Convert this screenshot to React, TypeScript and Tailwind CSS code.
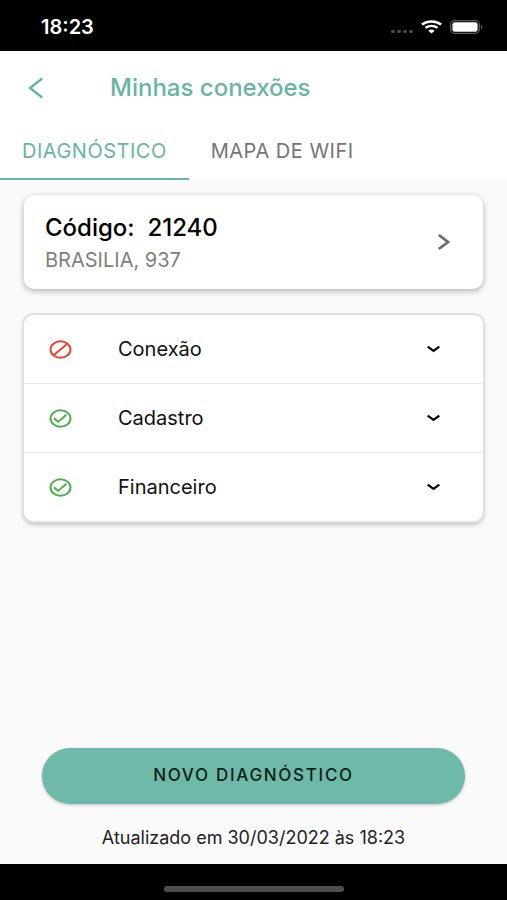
import { useState } from "react";

type Status = "error" | "ok";

type CheckItem = {
  name: string;
  status: Status;
};

const tabs = ["DIAGNÓSTICO", "MAPA DE WIFI"];

const checks: CheckItem[] = [
  { name: "Conexão", status: "error" },
  { name: "Cadastro", status: "ok" },
  { name: "Financeiro", status: "ok" },
];

function StatusBar() {
  return (
    <div className="flex h-[51px] items-center justify-between bg-black pt-[2px] pr-6 pl-[41px] text-white">
      <span className="text-xl font-semibold">18:23</span>
      <div className="flex items-center gap-2">
        <svg width="22" height="14" viewBox="0 0 22 14" fill="#4b4b4b">
          <rect x="0" y="10" width="4" height="3" rx="1.5" />
          <rect x="6" y="10" width="4" height="3" rx="1.5" />
          <rect x="12" y="10" width="4" height="3" rx="1.5" />
          <rect x="18" y="10" width="4" height="3" rx="1.5" />
        </svg>
        <svg width="21" height="14" viewBox="0 0 20 14" preserveAspectRatio="none" fill="none" stroke="white">
          <path d="M.8 4.6C6 .4 14 .4 19.2 4.6" strokeWidth="2.6" />
          <path d="M4.2 7.9C7.5 5.2 12.5 5.2 15.8 7.9" strokeWidth="2.4" />
          <path d="M7 10.8C8.6 9.2 11.4 9.2 13 10.8L10 13.6Z" fill="white" stroke="none" />
        </svg>
        <svg width="33" height="14" viewBox="0 0 33 14">
          <rect x=".7" y=".7" width="28.6" height="12.6" rx="4" fill="none" stroke="#5c5c5c" strokeWidth="1.3" />
          <rect x="2.4" y="2.2" width="25.2" height="9.6" rx="2.4" fill="white" />
          <path d="M31 4.8c1.6.6 1.6 3.8 0 4.4z" fill="#6b6b6b" />
        </svg>
      </div>
    </div>
  );
}

function StatusIcon({ status }: { status: Status }) {
  if (status === "error") {
    return (
      <svg width="23" height="19" viewBox="0 0 23 19" fill="none" stroke="#ea4335" strokeWidth="2">
        <ellipse cx="11.5" cy="9.5" rx="10" ry="8.2" />
        <path d="M4.6 15.2 18.4 3.8" />
      </svg>
    );
  }
  return (
    <svg width="23" height="19" viewBox="0 0 23 19" fill="none" stroke="#4caf50" strokeWidth="2">
      <ellipse cx="11.5" cy="9.5" rx="10" ry="8.2" />
      <path d="M5 9.4 9.2 12.8 17.4 5.8" />
    </svg>
  );
}

function App() {
  const [activeTab, setActiveTab] = useState(tabs[0]);
  const [openItem, setOpenItem] = useState<string | null>(null);

  return (
    <div className="flex min-h-screen flex-col bg-[#fafafa] font-['Inter',sans-serif] text-[#111]">
      <StatusBar />

      <header className="bg-white">
        <div className="flex h-[73px] items-center pl-7">
          <button aria-label="Voltar" className="w-[82px]">
            <svg width="16" height="22" viewBox="0 0 16 22" fill="none" stroke="#69b5a4" strokeWidth="2.5">
              <path d="M14.2 1.5 2 11l12.2 9.5" />
            </svg>
          </button>
          <h1 className="text-2xl font-medium text-[#69b5a4]">Minhas conexões</h1>
        </div>

        {/* Tabs */}
        <nav className="flex">
          {tabs.map((tab) => (
            <button
              key={tab}
              onClick={() => setActiveTab(tab)}
              className={`h-14 border-b-2 px-[22px] text-xl tracking-wide ${
                activeTab === tab
                  ? "border-[#69b5a4] text-[#69b5a4]"
                  : "border-transparent text-[#757575]"
              }`}
            >
              {tab}
            </button>
          ))}
        </nav>
      </header>

      <main className="flex flex-1 flex-col px-6 pt-[15px]">
        <button className="flex items-center justify-between rounded-[10px] bg-white py-[15px] pr-8 pl-[21px] text-left shadow-[0_2px_6px_rgba(0,0,0,0.3)]">
          <div>
            <p className="text-2xl leading-9 font-medium text-black">
              Código: &nbsp;21240
            </p>
            <p className="text-xl leading-7 text-[#808080]">BRASILIA, 937</p>
          </div>
          <svg width="14" height="18" viewBox="0 0 14 18" fill="none" stroke="#6b6b6b" strokeWidth="2.8">
            <path d="M1.8 2 11 9l-9.2 7" />
          </svg>
        </button>

        {/* Check list */}
        <ul className="mt-[26px] divide-y divide-[#e9e9e9] rounded-[9px] bg-white shadow-[0_0_0_2px_#dfe1e1,0_3px_5px_rgba(0,0,0,0.3)]">
          {checks.map((item) => (
            <li key={item.name}>
              <button
                aria-expanded={openItem === item.name}
                onClick={() => setOpenItem(openItem === item.name ? null : item.name)}
                className="flex h-[68px] w-full items-center pr-[43px] pl-[25px]"
              >
                <StatusIcon status={item.status} />
                <span className="ml-[46px] flex-1 text-left text-xl">{item.name}</span>
                <svg width="13" height="8" viewBox="0 0 13 8" fill="none" stroke="black" strokeWidth="2.2">
                  <path d="M.7 1.7 6.5 5.8l5.8-4.1" />
                </svg>
              </button>
            </li>
          ))}
        </ul>

        <div className="mt-auto px-[18px] pb-3">
          <button className="h-14 w-full rounded-full bg-[#6fb9a9] text-[17px] font-medium tracking-widest text-[#0c1f1b] shadow-[0_1px_3px_rgba(0,0,0,0.25)]">
            NOVO DIAGNÓSTICO
          </button>
          <p className="mt-5 text-center text-lg leading-7 text-[#222]">
            Atualizado em 30/03/2022 às 18:23
          </p>
        </div>
      </main>

      <footer className="flex h-9 items-end justify-center bg-black pb-2">
        <div className="h-[6px] w-[180px] rounded-full bg-[#4f4f4f]" />
      </footer>
    </div>
  );
}

export default App;
